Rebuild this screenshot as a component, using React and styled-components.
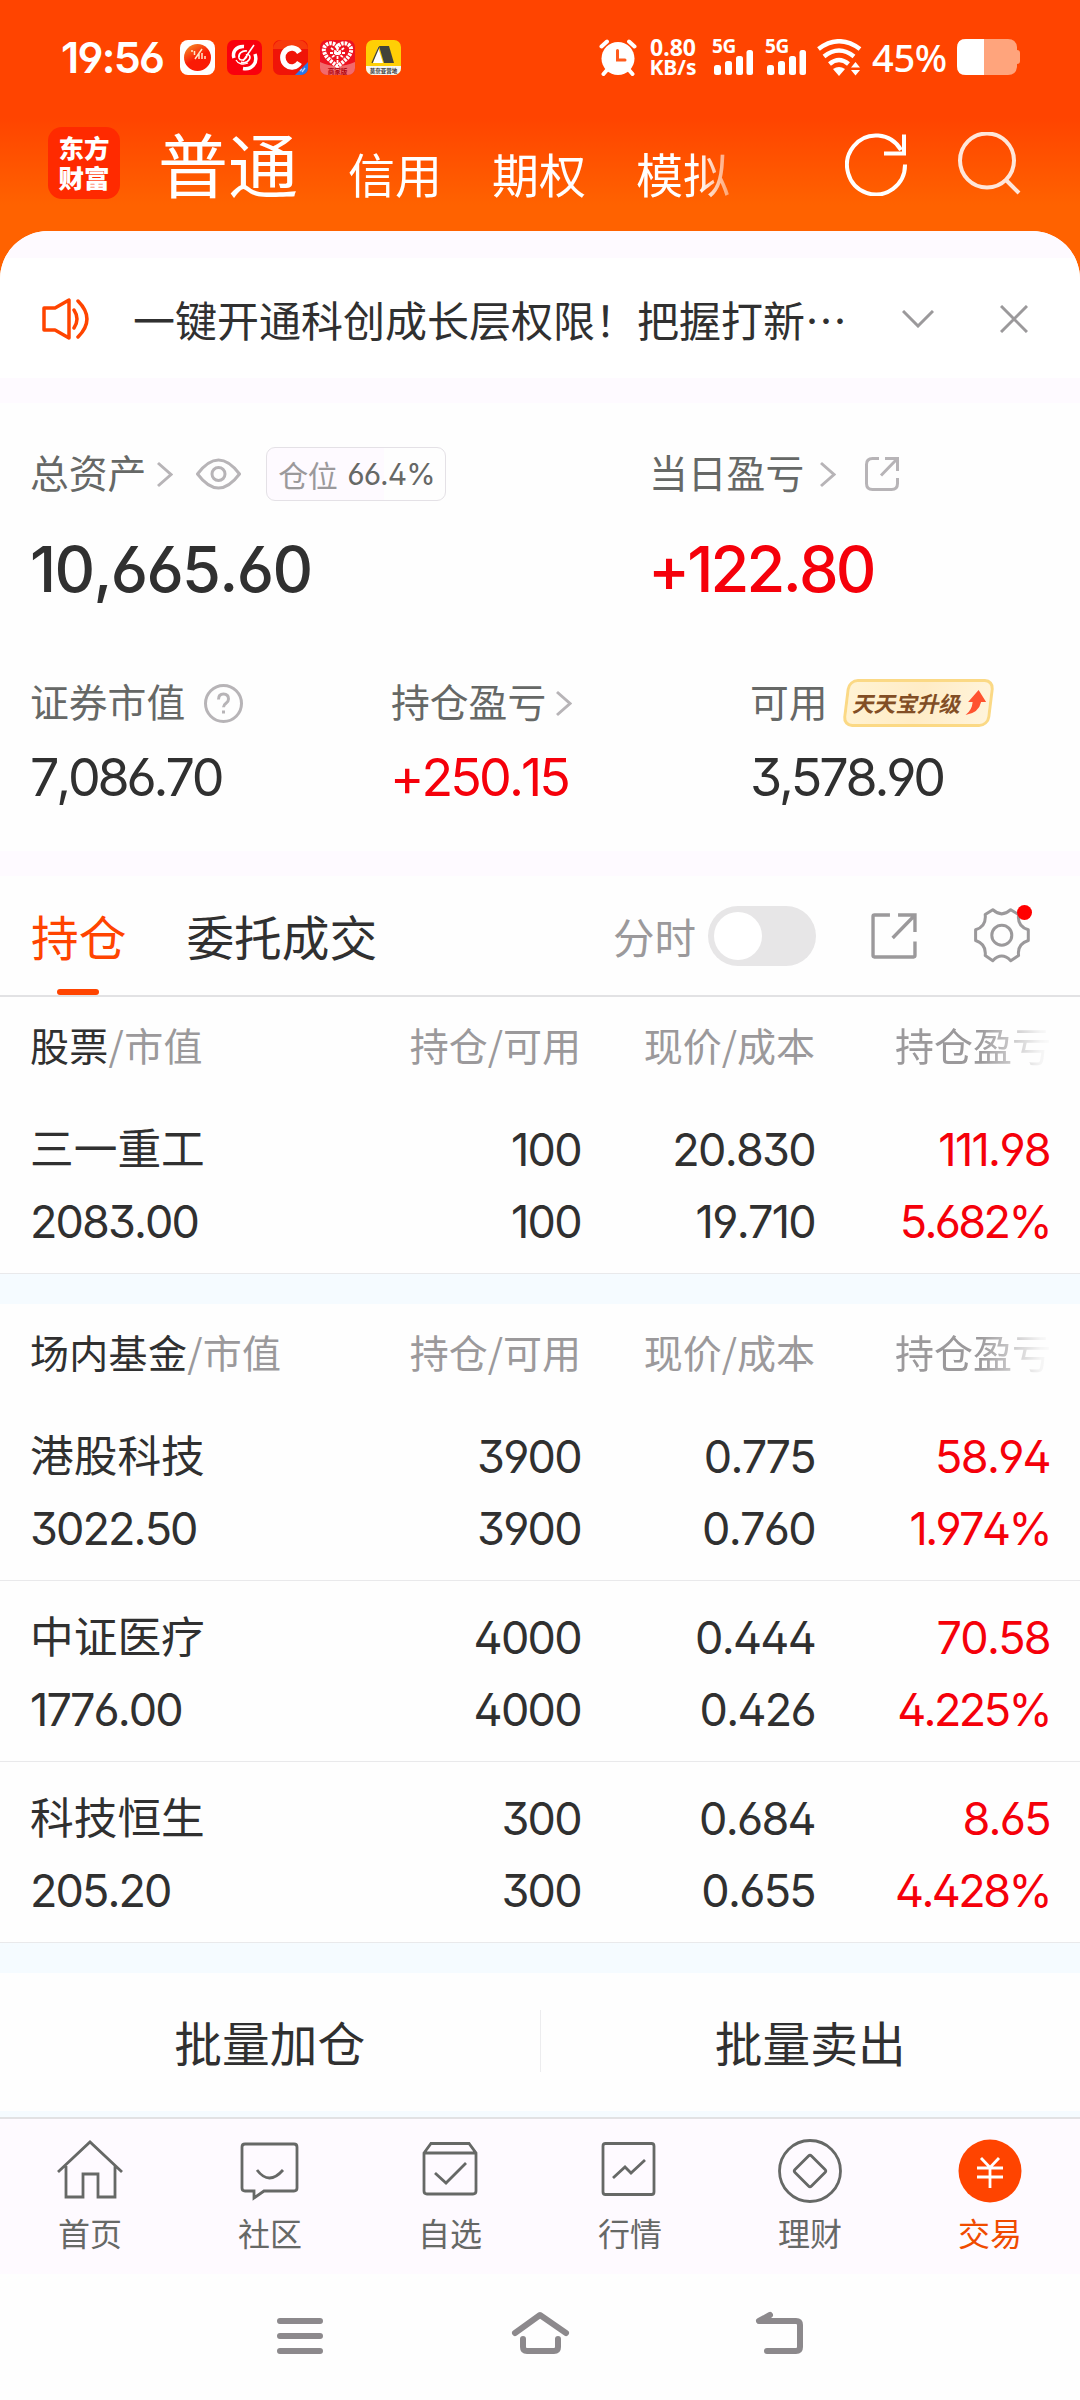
import React from 'react'
import styled, { createGlobalStyle, css } from 'styled-components'

const color = {
  primary: '#ff4400',
  up: '#f5000a',
  text: '#303030',
  label: '#666866',
  muted: '#9b999b',
  line: '#e2e2e4',
  tint: '#fefaff',
  band: '#f5fbff',
}

const latin = `Inter, "Noto Sans CJK SC", sans-serif`
const cjk = `"Noto Sans CJK SC", sans-serif`

const GlobalStyle = createGlobalStyle`
  * {
    box-sizing: border-box;
  }
  body {
    margin: 0;
    background: #fefefe;
    font-family: ${latin};
    font-feature-settings: 'ss01';
    font-kerning: none;
    color: ${color.text};
  }
  svg {
    display: block;
    flex: none;
  }
`

const Page = styled.div`
  width: 1080px;
  height: 2400px;
  overflow: hidden;
  display: flex;
  flex-direction: column;
  background: linear-gradient(#ff4400 0, #ff4400 118px, #ff6200 205px, #ff6200 300px, #fefefe 300px);
`

/* status bar */
const StatusBar = styled.div`
  height: 114px;
  padding: 0 60px 0 61px;
  display: flex;
  align-items: center;
  color: #fff;
`
const Clock = styled.div`
  width: 119px;
  font-size: 43px;
  font-weight: 600;
  letter-spacing: -1.7px;
  white-space: nowrap;
`
const AppIcons = styled.div`
  display: flex;
  gap: 11.6px;
`
const StatusRight = styled.div`
  margin-left: auto;
  display: flex;
  align-items: center;
`
const NetSpeed = styled.div`
  width: 50px;
  margin-left: 11px;
  text-align: center;
  font-family: 'Noto Sans', sans-serif;
  font-size: 21px;
  font-weight: 700;
  line-height: 20px;
  white-space: nowrap;

  span {
    display: block;
  }
  span:first-child {
    font-size: 23px;
  }
`
const Signal = styled.div`
  width: 41px;
  height: 36px;
  margin-left: ${(props) => props.gap}px;
  position: relative;

  span {
    position: absolute;
    left: 0;
    top: -4px;
    font-family: 'Noto Sans', sans-serif;
    font-size: 19px;
    font-weight: 700;
    line-height: 22px;
    letter-spacing: -0.4px;
  }
`
const WifiSlot = styled.div`
  margin-left: 11px;
`
const Percent = styled.div`
  width: 77px;
  margin: 0 8px 0 10px;
  font-family: 'Noto Sans', sans-serif;
  font-size: 38px;
  font-weight: 500;
  letter-spacing: -0.3px;
  white-space: nowrap;
`

/* title bar */
const TitleBar = styled.div`
  height: 117px;
  padding: 0 59px 0 48px;
  display: flex;
  align-items: flex-start;
  color: #fff;
`
const Logo = styled.div`
  width: 72px;
  height: 72px;
  margin-top: 13px;
  padding-top: 5px;
  border-radius: 14px;
  background: #ff2a00;
  font-family: ${cjk};
  font-size: 25.5px;
  font-weight: 900;
  line-height: 30px;
  text-align: center;
`
const Accounts = styled.div`
  width: 580px;
  height: 117px;
  margin: -6px 0 0 38px;
  padding-top: 4px;
  display: flex;
  align-items: baseline;
  gap: 50px;
  overflow: hidden;
  white-space: nowrap;
  mask-image: linear-gradient(to right, #000 540px, rgba(0, 0, 0, 0.5) 568px, transparent 590px);
`
const Account = styled.div`
  font-family: ${cjk};
  font-size: ${(props) => (props.active ? 70 : 47)}px;
  line-height: 102px;
`
const TitleActions = styled.div`
  margin: 18px 0 0 auto;
  display: flex;
  gap: 50px;
`

/* notice */
const Sheet = styled.div`
  flex: 1;
  border-radius: 48px 48px 0 0;
  background: #fefefe;
  overflow: hidden;
`
const Gap = styled.div`
  height: ${(props) => props.size}px;
  background: ${(props) => (props.blue ? color.band : color.tint)};
`
const Notice = styled.div`
  height: 120px;
  padding: 2px 52px 0 42px;
  display: flex;
  align-items: center;
  background: #fff;
`
const NoticeText = styled.div`
  width: 769px;
  margin-left: 43px;
  font-family: ${cjk};
  font-size: 42px;
  line-height: 60px;
  white-space: nowrap;
`
const CloseSlot = styled.div`
  margin-left: auto;
`

/* assets */
const Assets = styled.div`
  height: 448px;
  padding: 39px 31px 0 30px;
`
const AssetRow = styled.div`
  display: grid;
  grid-template-columns: ${(props) => props.columns};
  height: ${(props) => props.height}px;
  white-space: nowrap;
`
const LabelLine = styled.div`
  height: 64px;
  display: flex;
  align-items: center;
  font-size: 38.8px;
  color: ${color.label};
`
const Label = styled.span`
  margin-right: ${(props) => props.space}px;
  line-height: 64px;
`
const Chip = styled.div`
  width: 180px;
  height: 54px;
  margin-left: 25px;
  display: flex;
  align-items: center;
  justify-content: center;
  gap: 10px;
  border: 1px solid #e4e1e6;
  border-radius: 9px;
  background: linear-gradient(to right, ${color.tint} 66%, #fefefe 66%);
  font-size: 30px;
  letter-spacing: -1px;

  em {
    font-style: normal;
    letter-spacing: -0.5px;
    color: ${color.muted};
  }
`
const Amount = styled.div`
  margin-left: ${(props) => (props.up ? -1 : 0)}px;
  color: ${(props) => (props.up ? color.up : color.text)};
  ${(props) =>
    props.large
      ? css`
          margin-top: 28px;
          font-size: 63px;
          font-weight: 500;
          line-height: 70px;
          letter-spacing: ${props.up ? -2.8 : -1.7}px;
        `
      : css`
          margin-top: 13px;
          font-size: 52px;
          line-height: 60px;
          letter-spacing: ${props.up ? -2.9 : -3.2}px;
        `}
`
const Promo = styled.div`
  width: 147px;
  height: 48px;
  margin-left: 17px;
  padding-left: 6px;
  display: flex;
  align-items: center;
  gap: 4px;
  transform: skewX(-7deg);
  border: 3px solid #fbd985;
  border-radius: 10px;
  background: linear-gradient(100deg, #fff3d4, #ffecc6 50%, #fff4dc);
  font-family: ${cjk};
  font-size: 21.6px;
  font-weight: 700;
  color: #824e25;
`
const PromoText = styled.span`
  display: block;
  line-height: 34px;
  transform: skewX(-6deg);
`

/* holdings */
const TabRow = styled.div`
  height: 121px;
  padding: 0 50px 0 31px;
  display: flex;
  align-items: center;
  border-bottom: 2px solid ${color.line};
`
const Tab = styled.div`
  height: 121px;
  margin-right: 60px;
  position: relative;
  font-family: ${cjk};
  font-size: 47.7px;
  line-height: 121px;
  color: ${(props) => (props.active ? color.primary : color.text)};

  &::after {
    content: '';
    display: ${(props) => (props.active ? 'block' : 'none')};
    position: absolute;
    left: 26px;
    bottom: 1px;
    width: 42px;
    height: 6px;
    border-radius: 3px;
    background: ${color.primary};
  }
`
const TabTools = styled.div`
  margin-left: auto;
  display: flex;
  align-items: center;
  font-size: 41.5px;
  color: ${color.muted};
`
const Toggle = styled.div`
  width: 108px;
  height: 60px;
  margin: 0 55px 0 12px;
  padding: 6px;
  border-radius: 30px;
  background: #e7e6e7;

  &::before {
    content: '';
    display: block;
    width: 48px;
    height: 48px;
    border-radius: 50%;
    background: #fff;
  }
`
const GearSlot = styled.div`
  margin-left: 57px;
  position: relative;

  &::after {
    content: '';
    position: absolute;
    left: 43px;
    top: -3px;
    width: 15px;
    height: 15px;
    border-radius: 50%;
    background: #ff0000;
  }
`
const columns = css`
  display: grid;
  grid-template-columns: 261px 290px 234px 235px;
  padding: 0 30px 0 30px;
  white-space: nowrap;
`
const ColumnHead = styled.div`
  ${columns}
  height: 96px;
  padding-top: 17px;
  font-family: ${cjk};
  font-size: 39px;
  line-height: 60px;
  text-align: right;
  color: ${color.muted};

  & > :first-child {
    text-align: left;
    letter-spacing: 0.3px;
  }
  & > :last-child {
    padding-left: 80px;
    text-align: left;
    mask-image: linear-gradient(to right, #000 165px, rgba(0, 0, 0, 0.1) 225px, transparent 240px);
  }
  b {
    font-weight: 400;
    color: ${color.text};
  }
`
const HoldingRow = styled.div`
  ${columns}
  height: 181px;
  padding-top: 21px;
  border-bottom: 1px solid #e9e9eb;
  line-height: 72px;
  text-align: right;
`
const Cell = styled.div`
  font-size: 45px;
  letter-spacing: -1.7px;
  color: ${(props) => (props.up ? color.up : color.text)};
`
const Rate = styled.span`
  letter-spacing: -2.6px;
`
const NameCell = styled(Cell)`
  text-align: left;
  letter-spacing: -1.9px;

  span {
    display: block;
    height: 72px;
    font-size: 43.7px;
    letter-spacing: 0;
  }
`
const Batch = styled.div`
  height: 138px;
  padding-bottom: 2px;
  display: grid;
  grid-template-columns: 1fr 1px 1fr;
  align-items: center;
  font-family: ${cjk};
  font-size: 47.7px;
  text-align: center;
`
const Divider = styled.div`
  height: 62px;
  background: #ececee;
`

/* bottom */
const BottomBar = styled.div`
  height: 157px;
  display: grid;
  grid-template-columns: repeat(6, 1fr);
  border-top: 2px solid ${color.line};
  background: ${color.tint};
`
const BottomItem = styled.div`
  padding-top: 20px;
  display: flex;
  flex-direction: column;
  align-items: center;
  font-family: ${cjk};
  font-size: 32px;
  line-height: 48px;
  color: ${(props) => (props.active ? '#f04b00' : color.label)};

  svg {
    margin-bottom: 5px;
  }
`
const SystemNav = styled.div`
  height: 126px;
  padding: 36px 275px 0 276px;
  display: flex;
  justify-content: space-between;
`

const Chevron = () => (
  <svg width="17" height="28" viewBox="0 0 17 28" fill="none" stroke="#b7b4b7" strokeWidth="3">
    <path d="M2 3 15 14.5 2 26" />
  </svg>
)

const Bars = () => (
  <svg width="41" height="36" fill="#fff">
    <rect x="2" y="26" width="7" height="10" rx="2.5" />
    <rect x="13" y="22" width="7" height="14" rx="2.5" />
    <rect x="24" y="17" width="7" height="19" rx="2.5" />
    <rect x="34.5" y="11" width="6.5" height="25" rx="2.5" />
  </svg>
)

const StatusIcons = () => (
  <AppIcons>
    <svg width="35" height="35">
      <defs>
        <linearGradient id="ball" x1="0" y1="0" x2="0.6" y2="1">
          <stop offset="0" stopColor="#f59a2a" />
          <stop offset="0.6" stopColor="#fa1b05" />
        </linearGradient>
      </defs>
      <rect width="35" height="35" rx="8" fill="#fff" />
      <circle cx="17.5" cy="17.5" r="13.5" fill="url(#ball)" />
      <path d="M12 10v2M14.5 11v4M15 19l7-10M19 13v6M22 13v6M25 16v3" stroke="#ffe9c9" strokeWidth="1.5" />
    </svg>
    <svg width="35" height="35" fill="none" stroke="#fff">
      <rect width="35" height="35" rx="7" fill="#f9000d" stroke="none" />
      <path d="M17 6.5C9 6 5 12 7 18" strokeWidth="3.5" />
      <path d="M28 14c3 9-3 16-12 14.5" strokeWidth="3.5" />
      <path d="M27 5 16 21M20 11c-5-1-9 3-8 7 1 3 6 3 8-2M14 22c4 2 9-1 9-5 0-2-2-3-4-2" strokeWidth="1.6" />
      <path d="M9 20c2 4 7 5 12 3" strokeWidth="1.3" />
    </svg>
    <svg width="35" height="35">
      <rect width="35" height="35" rx="7" fill="#f01408" />
      <path d="M0 9a9 9 0 0 1 9-9h17a9 9 0 0 1 9 9z" fill="#f73a0c" />
      <path d="M35 22v6a7 7 0 0 1-7 7h-6z" fill="#2878e8" />
      <path d="M26.5 12.5A9 9.5 0 1 0 26.5 22.5" fill="none" stroke="#fff" strokeWidth="5.5" />
      <path d="m27 31 2-2m0 3 3-4" stroke="#b6d4ff" strokeWidth="1.3" />
    </svg>
    <svg width="35" height="35">
      <rect width="35" height="35" rx="7" fill="#ee1220" />
      <path d="M0 22q17 8 35 0v6a7 7 0 0 1-7 7H7a7 7 0 0 1-7-7z" fill="#f26a6c" />
      <path
        d="M17.5 7C12-1 0 5 5 14q2 5 12.5 12Q28 19 30 14C35 5 23-1 17.5 7z"
        fill="none"
        stroke="#fff"
        strokeWidth="4"
        strokeDasharray="2.5 1"
      />
      <path d="M17.5 8v15M10 13h15M11 8l13 10M24 8 11 18" stroke="#fff" strokeWidth="1.8" strokeDasharray="3 1" />
      <text x="17.5" y="33.5" fontSize="6.5" fontWeight="700" textAnchor="middle" fill="#b10712">
        商家版
      </text>
    </svg>
    <svg width="35" height="35">
      <rect width="35" height="35" rx="7" fill="#ffcf05" />
      <path d="M0 26h35v2a7 7 0 0 1-7 7H7a7 7 0 0 1-7-7z" fill="#f5f4ef" />
      <path d="M13 6h10l5 17H18z" fill="#41423a" />
      <path d="M12 7 7 23h10z" fill="#fff" />
      <path d="M6 23 13 7" stroke="#41423a" strokeWidth="1.2" />
      <text x="17.5" y="33" fontSize="5.5" fontWeight="700" textAnchor="middle" fill="#333">
        莫奈亚营地
      </text>
    </svg>
  </AppIcons>
)

const AlarmIcon = () => (
  <svg width="38" height="37" fill="none" stroke="#fff" strokeWidth="4" strokeLinecap="round">
    <circle cx="19" cy="19.5" r="16.5" fill="#fff" stroke="none" />
    <path d="M2.5 7.5 8 2.5M35.5 7.5 30 2.5M8 31l-3.5 4M30 31l3.5 4" />
    <path d="M18.5 11.5v9.5h7.5" stroke="#ff5a1c" strokeWidth="3" />
  </svg>
)

const WifiIcon = () => (
  <svg width="45" height="37" fill="none" stroke="#fff" strokeWidth="4.5">
    <path d="M1.5 10Q22 -5.5 43 10" />
    <path d="M7 17.5q15-12 30 0" />
    <path d="M12.5 25q9.5-8 19 0" />
    <path d="M16 30q6-4 12 0l-6 7z" fill="#fff" stroke="none" />
    <path d="M34 28.5 38.5 23l4.5 5.5zM34 31h9l-4.5 5.5z" fill="#fff" stroke="none" />
  </svg>
)

const BatteryIcon = () => (
  <svg width="63" height="36">
    <path
      d="M9 0h42q8 0 9 8v3q3 0 3 3v8q0 3-3 3v3q-1 8-9 8H9q-9 0-9-9V9q0-9 9-9z"
      fill="#ffa47c"
    />
    <path d="M9 0h18v36H9q-9 0-9-9V9q0-9 9-9z" fill="#fff" />
  </svg>
)

const RefreshIcon = () => (
  <svg width="63" height="64" fill="none" stroke="#fff" strokeWidth="4">
    <path d="M60 32.5A29 29.5 0 1 1 56 18" />
    <path d="M59 2.5v19H39" />
  </svg>
)

const SearchIcon = () => (
  <svg width="63" height="64" fill="none" stroke="#ffe6d9" strokeWidth="4">
    <circle cx="29" cy="28.5" r="27" />
    <path d="m47 47 14 14" />
  </svg>
)

const SpeakerIcon = () => (
  <svg width="48" height="42" fill="none" stroke={color.primary} strokeWidth="3.5" strokeLinejoin="round" strokeLinecap="round">
    <path d="M2 10h11L27 2v38l-14-8H2zM27 4v34" />
    <path d="M32 12q6 9 0 18M36 3q18 18 0 36" />
  </svg>
)

const EyeIcon = () => (
  <svg width="45" height="32" fill="none" stroke="#b7b4b7" strokeWidth="3">
    <path d="M1.5 16Q12 2 22.5 2T43.5 16Q33 30 22.5 30T1.5 16z" />
    <circle cx="22.5" cy="16" r="6.5" />
  </svg>
)

const ShareIcon = ({ size, radius, stroke }) => (
  <svg width={size} height={size} viewBox="0 0 34 34" fill="none" stroke={stroke} strokeWidth={size > 40 ? 2.5 : 3}>
    <path
      d={`M14 1.5H${1.5 + radius}Q1.5 1.5 1.5 ${1.5 + radius}V${32.5 - radius}Q1.5 32.5 ${1.5 + radius} 32.5H${32.5 - radius}Q32.5 32.5 32.5 ${32.5 - radius}V21`}
    />
    <path d="M20 1.5h12.5v12.5M32 2 16 18.5" />
  </svg>
)

const HelpIcon = () => (
  <svg width="39" height="39" fill="none" stroke="#b7b4b7" strokeWidth="3">
    <circle cx="19.5" cy="19.5" r="18" />
    <path d="M14.5 15.5q0-5.5 5-5.5t5 5q0 2.5-2.5 4.3t-2.5 4" />
    <path d="M19.5 26.5v3" />
  </svg>
)

const PromoArrow = () => (
  <svg width="20" height="26">
    <path d="M11 0l9 12h-5q-1 11-14 13 6-5 5.5-13H2z" fill="#ff5330" />
  </svg>
)

const GearIcon = () => (
  <svg width="56" height="55" fill="none" stroke={color.muted} strokeWidth="3" strokeLinejoin="round">
    <path d="M18.8 1.7Q27.7 10 36.7 1.7L44.6 6.5Q43 18.5 54.3 21.7V32.5Q43 36 44.6 47.5L36.7 52.7Q27.7 43.5 18.8 52.7L11.2 47.5Q12.5 36 1.6 32.5V21.7Q12.5 18.5 11.2 6.5z" />
    <circle cx="27.8" cy="27.2" r="10" />
  </svg>
)

const bottomIcons = {
  首页: (
    <svg width="66" height="64">
      <path d="M1 33 33 3l32 30M9 27v31h17V35h15v23h17V27" />
    </svg>
  ),
  社区: (
    <svg width="66" height="64">
      <path d="M8 5h49q3 0 3 3v41q0 3-3 3H27l-10 7v-7H8q-3 0-3-3V8q0-3 3-3z" />
      <path d="M20 31q12 16 26 0" />
    </svg>
  ),
  自选: (
    <svg width="66" height="64">
      <path d="M7 14 14 4.5h38L59 14v38q0 3-3 3H10q-3 0-3-3zH59M18 34l11 10 20-20" />
    </svg>
  ),
  行情: (
    <svg width="66" height="64">
      <rect x="6" y="4.5" width="51" height="51" rx="2.5" />
      <path d="m16 39 12-11 6 6 14-13" />
    </svg>
  ),
  理财: (
    <svg width="66" height="64">
      <circle cx="33" cy="32" r="30.5" />
      <path d="M31.5 17 18 30.5q-1.5 1.5 0 3L31.5 47q1.5 1.5 3 0L48 33.5q1.5-1.5 0-3L34.5 17q-1.5-1.5-3 0z" />
    </svg>
  ),
  交易: (
    <svg width="66" height="64">
      <circle cx="33" cy="32" r="31.5" fill={color.primary} stroke="none" />
      <path d="m24 19 9 9.5 9-9.5M20 29h26M20 38h26M33 28v21" stroke="#fff" />
    </svg>
  ),
}

const LineIcon = styled.span`
  svg {
    fill: none;
    stroke: ${color.label};
    stroke-width: 2.8px;
  }
`

const stocks = [['三一重工', '2083.00', '100', '100', '20.830', '19.710', '111.98', '5.682%']]
const funds = [
  ['港股科技', '3022.50', '3900', '3900', '0.775', '0.760', '58.94', '1.974%'],
  ['中证医疗', '1776.00', '4000', '4000', '0.444', '0.426', '70.58', '4.225%'],
  ['科技恒生', '205.20', '300', '300', '0.684', '0.655', '8.65', '4.428%'],
]

const Holdings = ({ title, rows }) => (
  <div>
    <ColumnHead>
      <div>
        <b>{title}</b>/市值
      </div>
      <div>持仓/可用</div>
      <div>现价/成本</div>
      <div>持仓盈亏</div>
    </ColumnHead>
    {rows.map(([name, value, held, usable, price, cost, profit, rate]) => (
      <HoldingRow key={name}>
        <NameCell>
          <span>{name}</span>
          {value}
        </NameCell>
        <Cell>
          {held}
          <br />
          {usable}
        </Cell>
        <Cell>
          {price}
          <br />
          {cost}
        </Cell>
        <Cell up>
          {profit}
          <br />
          <Rate>{rate}</Rate>
        </Cell>
      </HoldingRow>
    ))}
  </div>
)

const App = () => (
  <Page>
    <GlobalStyle />
    <StatusBar>
      <Clock>19:56</Clock>
      <StatusIcons />
      <StatusRight>
        <AlarmIcon />
        <NetSpeed>
          <span>0.80</span>
          <span>KB/s</span>
        </NetSpeed>
        <Signal gap={14}>
          <span>5G</span>
          <Bars />
        </Signal>
        <Signal gap={12}>
          <span>5G</span>
          <Bars />
        </Signal>
        <WifiSlot>
          <WifiIcon />
        </WifiSlot>
        <Percent>45%</Percent>
        <BatteryIcon />
      </StatusRight>
    </StatusBar>
    <TitleBar>
      <Logo>
        东方
        <br />
        财富
      </Logo>
      <Accounts>
        <Account active>普通</Account>
        <Account>信用</Account>
        <Account>期权</Account>
        <Account>模拟</Account>
      </Accounts>
      <TitleActions>
        <RefreshIcon />
        <SearchIcon />
      </TitleActions>
    </TitleBar>
    <Sheet>
      <Gap size={27} />
      <Notice>
        <SpeakerIcon />
        <NoticeText>一键开通科创成长层权限！把握打新…</NoticeText>
        <svg width="32" height="18" fill="none" stroke={color.muted} strokeWidth="3">
          <path d="m1 1 15 15L31 1" />
        </svg>
        <CloseSlot>
          <svg width="28" height="28" fill="none" stroke={color.muted} strokeWidth="3">
            <path d="m1 1 26 26M27 1 1 27" />
          </svg>
        </CloseSlot>
      </Notice>
      <Gap size={25} />
      <Assets>
        <AssetRow columns="619px 1fr" height={229}>
          <div>
            <LabelLine>
              <Label space={10}>总资产</Label>
              <Chevron />
              <Label space={23} />
              <EyeIcon />
              <Chip>
                <em>仓位</em>66.4%
              </Chip>
            </LabelLine>
            <Amount large>10,665.60</Amount>
          </div>
          <div>
            <LabelLine>
              <Label space={15}>当日盈亏</Label>
              <Chevron />
              <Label space={29} />
              <ShareIcon size={34} radius={6} stroke="#b7b4b7" />
            </LabelLine>
            <Amount large up>
              +122.80
            </Amount>
          </div>
        </AssetRow>
        <AssetRow columns="361px 359px 1fr" height={180}>
          <div>
            <LabelLine>
              <Label space={19}>证券市值</Label>
              <HelpIcon />
            </LabelLine>
            <Amount>7,086.70</Amount>
          </div>
          <div>
            <LabelLine>
              <Label space={9}>持仓盈亏</Label>
              <Chevron />
            </LabelLine>
            <Amount up>+250.15</Amount>
          </div>
          <div>
            <LabelLine>
              <Label space={0}>可用</Label>
              <Promo>
                <PromoText>天天宝升级</PromoText>
                <PromoArrow />
              </Promo>
            </LabelLine>
            <Amount>3,578.90</Amount>
          </div>
        </AssetRow>
      </Assets>
      <Gap size={25} />
      <TabRow>
        <Tab active>持仓</Tab>
        <Tab>委托成交</Tab>
        <TabTools>
          分时
          <Toggle />
          <ShareIcon size={46} radius={1} stroke={color.muted} />
          <GearSlot>
            <GearIcon />
          </GearSlot>
        </TabTools>
      </TabRow>
      <Holdings title="股票" rows={stocks} />
      <Gap blue size={30} />
      <Holdings title="场内基金" rows={funds} />
      <Gap blue size={30} />
      <Batch>
        <div>批量加仓</div>
        <Divider />
        <div>批量卖出</div>
      </Batch>
      <Gap blue size={6} />
      <BottomBar>
        {Object.keys(bottomIcons).map((name) => (
          <BottomItem key={name} active={name === '交易'}>
            <LineIcon>{bottomIcons[name]}</LineIcon>
            {name}
          </BottomItem>
        ))}
      </BottomBar>
      <SystemNav>
        <svg width="48" height="46" fill="none" stroke="#8c898c" strokeWidth="6" strokeLinecap="round">
          <path d="M4 11h40M4 26h40M4 41h40" />
        </svg>
        <svg width="60" height="46" fill="none" stroke="#8c898c" strokeWidth="6" strokeLinecap="round" strokeLinejoin="round">
          <path d="M5 23 30 5l26 18M13 29v8q0 4 4 4h27q4 0 4-4v-8" />
        </svg>
        <svg width="50" height="46" fill="none" stroke="#8c898c" strokeWidth="6" strokeLinecap="round" strokeLinejoin="round">
          <path d="M15 5 4 11h37q4 0 4 4v22q0 4-4 4H12" />
        </svg>
      </SystemNav>
    </Sheet>
  </Page>
)

export default App
